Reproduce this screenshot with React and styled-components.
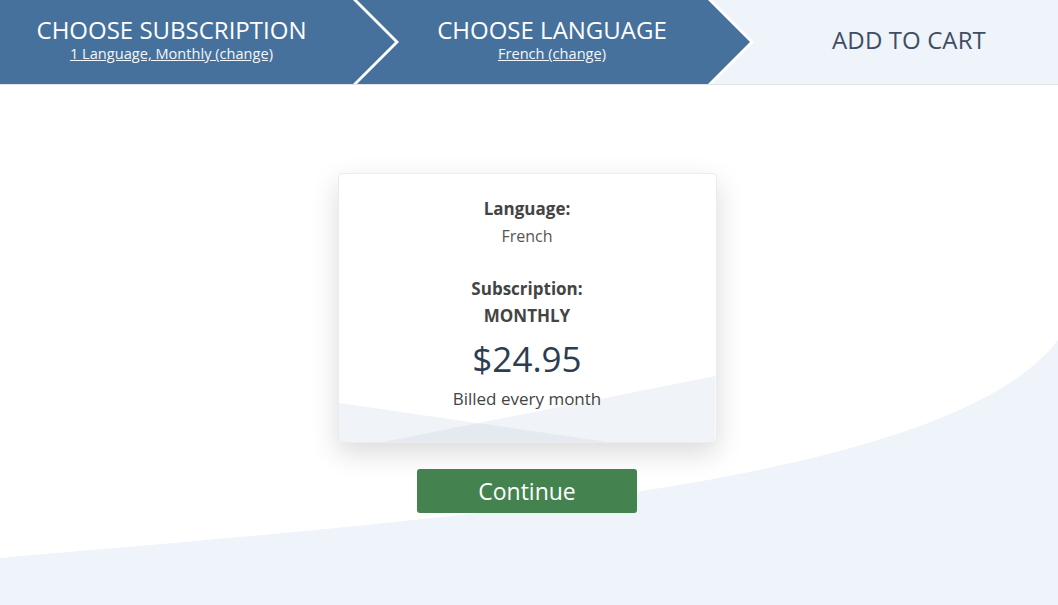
import styled, { createGlobalStyle } from 'styled-components';

const GlobalStyle = createGlobalStyle`
  html, body {
    margin: 0;
    padding: 0;
    background: #ffffff;
    font-family: "Open Sans", "Noto Sans", Arial, sans-serif;
  }
  * { box-sizing: border-box; }
`

const Page = styled.div`
  display: flex;
  flex-direction: column;
  min-height: 100vh;
`

const StepsBar = styled.nav`
  display: flex;
  height: 85px;
  background: #eff3fa;
  border-bottom: 1px solid #dfe4eb;
`

const Step = styled.div`
  position: relative;
  flex: 0 0 ${p => p.$w}px;
  margin-left: ${p => p.$overlap || 0}px;
  z-index: ${p => p.$z};
  height: 84px;
  padding: 0 ${p => p.$pr}px 6px ${p => p.$pl}px;
  display: flex;
  flex-direction: column;
  align-items: center;
  justify-content: center;
  background: #ffffff;
  clip-path: polygon(0 0, calc(100% - 42px) 0, 100% 42px, calc(100% - 42px) 100%, 0 100%);

  &::before {
    content: '';
    position: absolute;
    inset: 0;
    background: #46719c;
    clip-path: polygon(0 0, calc(100% - 46px) 0, calc(100% - 4px) 42px, calc(100% - 46px) 100%, 0 100%);
  }
`

const CurrentStep = styled.div`
  flex: 1;
  display: flex;
  align-items: center;
  justify-content: center;
  padding-left: 6px;
  padding-bottom: 6px;
  font-size: 24px;
  color: #3e4e64;
  letter-spacing: 0.1px;
`

const StepTitle = styled.div`
  position: relative;
  font-size: 24px;
  line-height: 26px;
  font-weight: 500;
  color: #ffffff;
  text-transform: uppercase;
`

const StepLink = styled.a`
  position: relative;
  margin-top: 2px;
  font-size: 14.6px;
  line-height: 17px;
  color: #f2f6fa;
  text-decoration: underline;
  cursor: pointer;
`

const Main = styled.main`
  position: relative;
  flex: 1;
  overflow: hidden;
  display: flex;
  flex-direction: column;
  align-items: center;
  padding: 88px 4px 0 0;
`

const Wave = styled.svg`
  position: absolute;
  inset: 0;
  width: 100%;
  height: 100%;
  z-index: 0;
`

const Card = styled.section`
  position: relative;
  z-index: 1;
  isolation: isolate;
  overflow: hidden;
  width: 379px;
  height: 270px;
  padding-top: 23px;
  background: #ffffff;
  border: 1px solid #ececec;
  border-radius: 4px;
  box-shadow: 0 10px 28px rgba(0, 0, 0, 0.15);
  display: flex;
  flex-direction: column;
  align-items: center;
  text-align: center;

  &::before, &::after {
    content: '';
    position: absolute;
    inset: 0;
    z-index: -1;
    background: rgba(205, 216, 230, 0.3);
  }
  &::before {
    clip-path: polygon(0 229px, 269px 100%, 0 100%);
  }
  &::after {
    clip-path: polygon(100% 202px, 100% 100%, 45px 100%);
  }
`

const Label = styled.div`
  font-size: 17px;
  line-height: 24px;
  font-weight: 700;
  color: #444444;
  margin-top: ${p => p.$mt || 0}px;
`

const Value = styled.div`
  font-size: 16px;
  line-height: 30px;
  color: #555555;
  font-weight: ${p => (p.$bold ? 700 : 400)};
  ${p => p.$bold && 'color: #444444; font-size: 17px;'}
`

const Price = styled.div`
  font-size: 35px;
  line-height: 50px;
  margin-top: 3px;
  color: #2c3d52;
`

const Billed = styled.div`
  font-size: 17px;
  line-height: 24px;
  margin-top: 3px;
  color: #444444;
`

const ContinueButton = styled.button`
  position: relative;
  z-index: 1;
  margin-top: 26px;
  width: 220px;
  height: 44px;
  border: none;
  border-radius: 3px;
  background: #44834f;
  color: #ffffff;
  font-family: inherit;
  font-size: 23px;
  font-weight: 500;
  cursor: pointer;
`

export default function App() {
  return (
    <Page>
      <GlobalStyle />
      <StepsBar>
        <Step $w={399} $z={2} $pl={0} $pr={56}>
          <StepTitle>Choose Subscription</StepTitle>
          <StepLink>1 Language, Monthly (change)</StepLink>
        </Step>
        <Step $w={404} $z={1} $overlap={-49} $pl={50} $pr={50}>
          <StepTitle>Choose Language</StepTitle>
          <StepLink>French (change)</StepLink>
        </Step>
        <CurrentStep>ADD TO CART</CurrentStep>
      </StepsBar>

      <Main>
        <Wave viewBox="0 0 1058 520" preserveAspectRatio="none">
          <path d="M0 473 C 500 430, 950 395, 1058 255 L 1058 520 L 0 520 Z" fill="#eff3fa" />
        </Wave>
        <Card>
          <Label>Language:</Label>
          <Value>French</Value>
          <Label $mt={26}>Subscription:</Label>
          <Value $bold>MONTHLY</Value>
          <Price>$24.95</Price>
          <Billed>Billed every month</Billed>
        </Card>
        <ContinueButton>Continue</ContinueButton>
      </Main>
    </Page>
  );
}
